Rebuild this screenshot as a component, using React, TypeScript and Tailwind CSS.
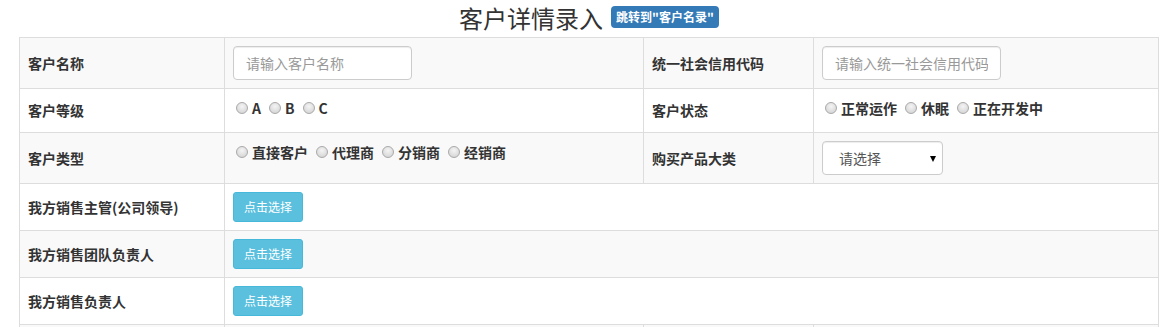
import React from "react";

// ── Shared bits ───────────────────────────────────────────────────────────────
const FONT = "[font-family:'Noto_Sans_CJK_SC','Liberation_Sans',sans-serif]";

const Radio: React.FC<{ label: string; first?: boolean }> = ({ label, first }) => (
  <label className={`flex items-center ${first ? "" : "ml-[5px]"}`}>
    <span className="ml-[3px] mr-[4px] inline-block w-[12px] h-[12px] rounded-full border border-[#a9a9a9] bg-[radial-gradient(circle_at_50%_35%,#f4f4f4,#cfcfcf)]" />
    <span className="font-bold text-[14px] leading-5 text-[#333]">{label}</span>
  </label>
);

const RadioGroup: React.FC<{ items: string[] }> = ({ items }) => (
  <div className="flex items-center">
    {items.map((it, i) => (
      <Radio key={it} label={it} first={i === 0} />
    ))}
  </div>
);

const TextInput: React.FC<{ placeholder: string }> = ({ placeholder }) => (
  <input
    placeholder={placeholder}
    className="w-[179px] h-[34px] px-[12px] border border-[#ccc] rounded-[4px] bg-white text-[14px] text-[#555] placeholder:text-[#999] shadow-[inset_0_1px_1px_rgba(0,0,0,0.075)] outline-none"
  />
);

const PickButton: React.FC = () => (
  <button className="w-[70px] h-[30px] rounded-[3px] bg-[#5bc0de] border border-[#46b8da] text-white text-[12px] leading-[28px]">
    点击选择
  </button>
);

// ── Table cells ───────────────────────────────────────────────────────────────
const Label: React.FC<{ children: React.ReactNode }> = ({ children }) => (
  <div className="border-r border-b border-[#ddd] px-[8px] flex items-center font-bold text-[14px] text-[#333]">
    {children}
  </div>
);

const Cell: React.FC<{ children?: React.ReactNode; top?: boolean; span?: boolean }> = ({
  children,
  top,
  span,
}) => (
  <div
    className={`border-r border-b border-[#ddd] px-[8px] flex ${top ? "items-start pt-[9px]" : "items-center"} ${
      span ? "col-span-3" : ""
    }`}
  >
    {children}
  </div>
);

const Row: React.FC<{ children: React.ReactNode; striped?: boolean; h: string }> = ({
  children,
  striped,
  h,
}) => (
  <div
    className={`grid grid-cols-[205px_419px_170px_345px] ${h} ${striped ? "bg-[#f9f9f9]" : "bg-white"}`}
  >
    {children}
  </div>
);

export default function App() {
  return (
    <div className={`w-[1174px] h-[327px] overflow-hidden bg-white ${FONT}`}>
      {/* ================= TITLE ================= */}
      <div className="h-[37px] flex items-start justify-center pl-[4px]">
        <h3 className="text-[24px] leading-[35px] text-[#333] font-normal">客户详情录入</h3>
        <span className="ml-[8px] mt-[6px] h-[22px] px-[5px] rounded-[4px] bg-[#337ab7] text-white text-[12px] font-bold leading-[22px]">
          跳转到"客户名录"
        </span>
      </div>

      {/* ================= FORM TABLE ================= */}
      <div className="ml-[19px] w-[1140px] border-l border-t border-[#ddd]">
        <Row striped h="h-[51px]">
          <Label>客户名称</Label>
          <Cell>
            <TextInput placeholder="请输入客户名称" />
          </Cell>
          <Label>统一社会信用代码</Label>
          <Cell>
            <TextInput placeholder="请输入统一社会信用代码" />
          </Cell>
        </Row>

        <Row h="h-[44px]">
          <Label>客户等级</Label>
          <Cell top>
            <RadioGroup items={["A", "B", "C"]} />
          </Cell>
          <Label>客户状态</Label>
          <Cell top>
            <RadioGroup items={["正常运作", "休眠", "正在开发中"]} />
          </Cell>
        </Row>

        <Row striped h="h-[51px]">
          <Label>客户类型</Label>
          <Cell top>
            <RadioGroup items={["直接客户", "代理商", "分销商", "经销商"]} />
          </Cell>
          <Label>购买产品大类</Label>
          <Cell>
            <div className="relative w-[121px] h-[34px] border border-[#ccc] rounded-[4px] bg-white flex items-center pl-[16px] text-[14px] text-[#555] shadow-[inset_0_1px_1px_rgba(0,0,0,0.075)]">
              请选择
              <span className="absolute right-[6px] top-[14px] w-0 h-0 border-l-[3px] border-r-[3px] border-t-[6px] border-l-transparent border-r-transparent border-t-black" />
            </div>
          </Cell>
        </Row>

        <Row h="h-[47px]">
          <Label>我方销售主管(公司领导)</Label>
          <Cell span>
            <PickButton />
          </Cell>
        </Row>

        <Row striped h="h-[47px]">
          <Label>我方销售团队负责人</Label>
          <Cell span>
            <PickButton />
          </Cell>
        </Row>

        <Row h="h-[47px]">
          <Label>我方销售负责人</Label>
          <Cell span>
            <PickButton />
          </Cell>
        </Row>

        <Row striped h="h-[47px]">
          <Label>{""}</Label>
          <Cell />
          <Label>{""}</Label>
          <Cell />
        </Row>
      </div>
    </div>
  );
}
